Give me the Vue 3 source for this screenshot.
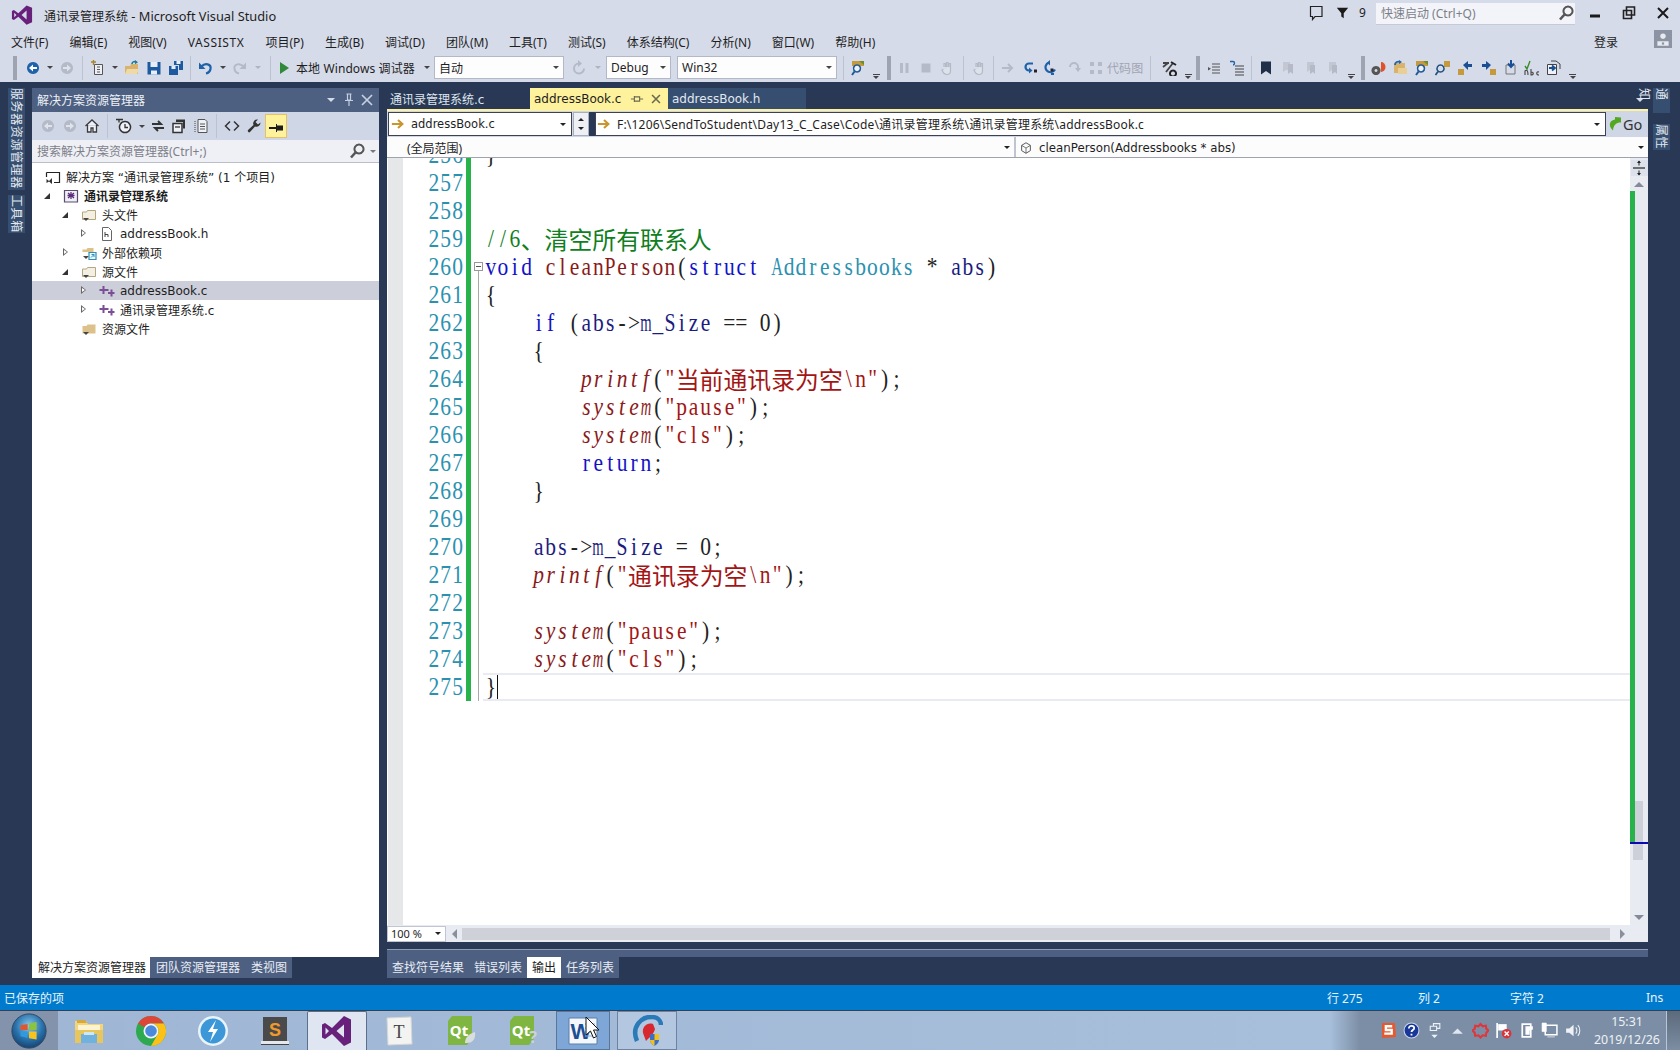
<script setup>
const G = '#b4bac8'
const BL = '#1e62aa'
const icons = {
  back: [['M8 2a6 6 0 1 0 .01 0Z', BL], ['M4 8l4-3.5V7h4v2H8v2.5z', '#fff']],
  fwdOff: [['M8 2a6 6 0 1 0 .01 0Z', G], ['M12 8L8 4.5V7H4v2h4v2.5z', '#dfe3ec']],
  backOff: [['M8 2a6 6 0 1 0 .01 0Z', G], ['M4 8l4-3.5V7h4v2H8v2.5z', '#dfe3ec']],
  newp: [['M4.5 4.5h8v10h-8z', '#eef0f6', '#555'], ['M7 7h3M7 9.5h3M7 12h3', 'none', '#555'], ['M1 2h5M3.5 0v5', 'none', '#a8842c', 1.4]],
  open: [['M1 6h5l1-2h7v10H1z', '#d9b36c'], ['M3 9h12l-2 5H1z', '#eed9a8'], ['M8 4c0-2 2-3 4-2', 'none', '#1e7a9a', 1.6], ['M11 0l3 2.2-3 2z', '#1e7a9a']],
  save: [['M1.5 2h13v12.5h-13z', '#1e5aa0'], ['M4.5 2h7v5h-7z', '#e8eef8'], ['M5 10.5h6v4H5z', '#e8eef8']],
  saveall: [['M1 6h9v9H1z', '#1e5aa0'], ['M3.5 6h4v3h-4z', '#e8eef8'], ['M6 1h9v9h-4V5H6z', '#1e5aa0'], ['M8.5 1h4v3h-4z', '#e8eef8']],
  undo: [['M4.5 6.5c3.5-4 10-2.5 9 2.5-.4 2.2-2.2 4-4.5 4.5', 'none', BL, 2.2], ['M2 2.5V9h6.5z', BL]],
  redoOff: [['M11.5 6.5c-3.5-4-10-2.5-9 2.5.4 2.2 2.2 4 4.5 4.5', 'none', G, 2], ['M14 2.5V9H7.5z', G]],
  play: [['M4 2l9 6-9 6z', '#2f8a3a']],
  restartOff: [['M8 3.5a5 5 0 1 0 5 5', 'none', G, 2], ['M7 0v7l4-3.5z', G]],
  pause: [['M4 3h3v10H4zM9.5 3h3v10h-3z', G]],
  stop: [['M3.5 3.5h9v9h-9z', G]],
  hand: [['M5 7V3.5h1.5V7M7.5 7V2.5H9V7M10 7V3.5h1.5V11c0 2-1.5 3.5-3.5 3.5S4 13 3 10l1.5-.5', '#dde1ea', G, 1.2]],
  arrowOff: [['M2 8h9M8 4l4 4-4 4', 'none', G, 2]],
  stepIn: [['M11 3.5H7a3.5 3.5 0 0 0 0 7h2', 'none', BL, 2.2], ['M7 7.5l3.5 3-3.5 3z', BL], ['M12 9.5h3v3h-3z', '#223']],
  stepOver: [['M5 2.5a5 5 0 1 0 6 7', 'none', BL, 2.2], ['M6 0L3 2.7l3 2.7z', BL], ['M6.5 8.5h3v3h-3z', '#223'], ['M7 13h3v2H7z', BL]],
  stepOutOff: [['M4 7a4 4 0 0 1 8 0v3', 'none', G, 2], ['M9 8l3 4 3-4z', G]],
  map: [['M2 2h4v4H2zM10 2h4v4h-4zM2 10h4v4H2zM10 10h4v4h-4z', G]],
  vaFix: [['M1 3h6M1 7l5-4M4 12l7-9', 'none', '#444', 1.8], ['M11 10.5a3 3 0 1 0 .01 0Z', 'none', '#222', 2], ['M9 2l5 3', 'none', '#222', 2]],
  indentL: [['M6 4h8M6 7h8M6 10h8M6 13h8', 'none', '#555', 1.2], ['M2 7l3 1.8L2 10.500z', '#555']],
  indentR: [['M6 6h9M6 9h9M6 12h9M6 15h9', 'none', '#444', 1.2], ['M1 1.500h3c2 0 2 3.500 0 3.500', 'none', '#1e62aa', 1.4]],
  bookmark: [['M3 1.500h10v13l-5-3.500-5 3.500z', '#1f2f48']],
  bmOff: [['M3 2h7v10l-3.500-2.500L3 12z', '#c2c7d2'], ['M8 4h5v10l-2.500-2-2.500 2z', G]],
  bmOff2: [['M5 2h7v10L8.500 9.500 5 12z', '#c2c7d2'], ['M8 5h5v9l-2-2-3 2z', G]],
  gear: [['M6 6a4.500 4.500 0 1 0 .01 0Z', '#555'], ['M6 9a1.500 1.500 0 1 0 .01 0Z', '#d9dbe0'], ['M11 2a4.500 5 0 0 1 0 10z', '#e2502a']],
  sync: [['M2 3h11v10H2z', '#d9b36c'], ['M6 8h9v6H6z', '#e9cf96'], ['M3 5c0-3 3-4 5-3', 'none', BL, 1.800], ['M7 0l3 2-3 2z', BL]],
  findRef: [['M2 1h12v5H2z', '#c49a3c'], ['M9 1l5 4V1z', '#6b8f2c'], ['M7 5a3.500 3.500 0 1 0 .01 0Z', '#eef2f8', '#1e5a9a', 1.600], ['M4.500 11.500L2 15', 'none', '#1e5a9a', 2]],
  findSym: [['M9 1h6v6H9z', '#c49a3c'], ['M5.500 5a3.500 3.500 0 1 0 .01 0Z', 'none', '#22527f', 1.500], ['M3 11.500L.5 15', 'none', '#22527f', 1.800]],
  goL: [['M1 9h6v6H1z', '#c49a3c'], ['M6 5l5-4v3h4v3h-4v3z', '#1a4f94']],
  goR: [['M9 9h6v6H9z', '#c49a3c'], ['M10 5L5 1v3H1v3h4v3z', '#1a4f94']],
  back2: [['M3 5h9v9H3z', 'none', '#777', 1], ['M8 0v6M5 3.500L8 7l3-3.500', 'none', '#1a4f94', 2]],
  spell: [['M1 6l2 3 3-8', 'none', '#3d8a2c', 1.400], ['M1 15V11c2-2 3 0 3 4M7 9v6c3 0 3-3 0-3M15 12c-3-1-3 3 0 3', 'none', '#444', 1.100]],
  refact: [['M1.500 4.500h9v10h-9z', '#eef1f7', '#444'], ['M5 1h5l4 3v5', 'none', '#444'], ['M3 8h5M6 5.500l3 2.500-3 2.500', 'none', '#1a4f94', 1.800]],
  home: [['M1.500 8L8 2l6.500 6M3.500 7v7h3.500v-4h2v4h3.500V7', '#eef1f7', '#3b3b3b', 1.300]],
  clock: [['M9 3.500a5.500 5.500 0 1 0 .01 0Z', '#eef1f7', '#333', 1.500], ['M9 6v3.500h3', 'none', '#333', 1.300], ['M0 1.500h7M3 1.500v3', 'none', '#333', 1.300]],
  refresh: [['M2 6h9l-3-3M14 10H5l3 3', 'none', '#333', 1.900]],
  collapse: [['M5 1.500h9v9h-2V4H5z', '#333'], ['M2 5.500h9v9H2z', '#eef1f7', '#333', 1.500], ['M4 9h5', 'none', '#333', 1.300]],
  files: [['M5 1.500h7l2 2v11H5z', '#eef1f7', '#555'], ['M7 6h5M7 8.500h5M7 11h5', 'none', '#555'], ['M2 3v11', 'none', '#777', 1.500, '1 1']],
  code: [['M6 3.500L1.500 8 6 12.500M10 3.500L14.500 8 10 12.500', 'none', '#333', 1.500]],
  wrench: [['M14.500 4.500a4 4 0 0 1-5.500 4L4 14c-1 1.200-3 -.5-2-2l5.500-5a4 4 0 0 1 4.500-5.500L9.500 4l2.500 2.500z', '#333']],
  pinOn: [['M1 9h7v2H1zM8 6h1v8H8zM9 7.500h6v5H9z', '#1d1d1d']],
  search: [['M10 1.500a4.500 4.500 0 1 0 .01 0Z', 'none', '#555', 2], ['M6.500 9.500L2 14.500', 'none', '#555', 2.600]],
  comment: [['M2.500 1.500h11.500v10H7l-2.500 3v-3h-2z', 'none', '#222', 1.200]],
  filter: [['M1 2h14L9.500 9v6L6.500 13V9z', '#1a1a1a']],
  restore: [['M5.500 2h8v8h-8zM2.500 5.500h8v8h-8z', '#d6dbe9', '#222', 1.600]],
  close: [['M3 3l10 10M13 3L3 13', 'none', '#1a1a1a', 2]],
  min: [['M3 9.500h10v3H3z', '#1a1a1a']],
  user: [['M0 0h16v16H0z', '#8c93a3'], ['M8 3a2.500 2.500 0 1 0 .01 0Z', '#e8eaf0'], ['M3 14V10h10v4z', '#e8eaf0'], ['M7 11h2v2H7z', '#8c93a3']],
  gold: [['M1 8h11M8 3.500L13 8l-5 4.500', 'none', '#c9952e', 2.400]],
  cube: [['M8 2l5 3v6l-5 3-5-3V5z', 'none', '#555', 1.100], ['M3 5l5 3 5-3M8 8v6', 'none', '#555', .9]],
  pinSm: [['M1 8h4M5 4.500v7M5 5.500h6v5H5zM11 8h4', 'none', '#6a6a52', 1.300]],
  xSm: [['M3.500 3.500l9 9M12.500 3.500l-9 9', 'none', '#6a6a52', 1.800]],
  pinW: [['M5.500 2h5M6.500 2v6h3V2M4 8.500h8M8 8.500V14', 'none', '#c6d0e0', 1.200]],
  xW: [['M3 3l10 10M13 3L3 13', 'none', '#c6d0e0', 1.700]],
  go: [['M14 1.500v5C9 6.500 6.500 9 6 14.500 2 11 1 5 8 3.500V1z', '#54a81f']],
  ddW: [['M4 6h8l-4 4z', '#d4dbe8']],
  sol: [['M1.500 3.500H14.500V13.500H9', 'none', '#222', 1.200], ['M1.500 3.500V8', 'none', '#222', 1.200], ['M1.500 10l2.500 2 3-3v6l-3-2.500L1.500 14z', '#333']],
  proj: [['M1.500 2.500h13v11.500h-13z', '#eef0f6', '#5c4a70', 1.200], ['M8 4v7M4.500 7.500h7M5 5l6 5M11 5l-6 5', 'none', '#5c2d7a', 1.300]],
  filt: [['M1.500 5h4l1-1.500h8v9h-13z', '#f3efe2', '#b5a77c'], ['M2 11l3 3 3-3z', '#444']],
  filtFull: [['M1.500 5h4l1-1.500h8v9h-13z', '#dcc28a'], ['M2 11l3 3 3-3z', '#444']],
  ext: [['M1.500 4.500h4l1-1.500h6v4h-11z', '#dcc28a'], ['M2 11l3 3 3-3z', '#444'], ['M8 7.500h7v7H8z', '#eef7fb', '#2f8fb8', 1.200], ['M10 12.500l3-3M10.500 9.500H13V12', 'none', '#2f8fb8']],
  hfile: [['M3.500 1.500h6l3 3v10h-9z', '#fff', '#666'], ['M6 6v5M6 8.500h3V11', 'none', '#444']],
  cfile: [['M.5 7h9M4.500 3v8M9 10h6.500M12.500 6.500v7', 'none', '#7a4f96', 2]]
}
const tb = [
  ['grip', 13, 5], ['sp', 0, 5], ['back', 0, 18], ['dd', 0, 16], ['fwdOff', 0, 18], ['sep', 0, 12],
  ['newp', 0, 20], ['dd', 0, 13], ['open', 0, 22], ['save', 0, 22], ['saveall', 0, 21], ['sep', 0, 8],
  ['undo', 0, 22], ['ddd', 0, 14], ['redoOff', 0, 20], ['ddg', 0, 16], ['sep', 0, 8], ['play', 0, 20]
]
const tb2 = [['restartOff', 29], ['ddg', 10], ['SP', 3]]
const tb3 = [
  ['sep', 12], ['findRef', 18], ['ovf', 18], ['grip', 8], ['pause', 22], ['stop', 21], ['hand', 22], ['sep', 10], ['hand', 22], ['sep', 7],
  ['arrowOff', 22], ['stepIn', 22], ['stepOver', 22], ['stepOutOff', 22], ['map', 21]
]
const tb4 = [
  ['sep', 15], ['vaFix', 24], ['ovf', 12], ['grip', 10], ['indentL', 24], ['indentR', 22], ['sep', 7], ['bookmark', 22], ['bmOff', 22], ['bmOff2', 22], ['bmOff2', 22],
  ['ovf', 16], ['grip', 8], ['gear', 22], ['sync', 21], ['findRef', 23], ['findSym', 20], ['goL', 24], ['goR', 23], ['back2', 21], ['spell', 22], ['refact', 21], ['ovf', 17]
]
const panelTools = [
  ['backOff', 22], ['fwdOff', 22], ['home', 22], ['sep', 9], ['clock', 24], ['dd', 12], ['refresh', 20], ['collapse', 22], ['files', 22], ['sep', 9], ['code', 22], ['wrench', 22], ['pinOn', 22]
]
const menus = ['文件(F)', '编辑(E)', '视图(V)', 'VASSISTX', '项目(P)', '生成(B)', '调试(D)', '团队(M)', '工具(T)', '测试(S)', '体系结构(C)', '分析(N)', '窗口(W)', '帮助(H)']
const tree = [
  { d: 0, ic: 'sol', t: '解决方案 “通讯录管理系统” (1 个项目)' },
  { d: 1, a: 'open', ic: 'proj', t: '通讯录管理系统', b: true },
  { d: 2, a: 'open', ic: 'filt', t: '头文件' },
  { d: 3, a: 'shut', ic: 'hfile', t: 'addressBook.h' },
  { d: 2, a: 'shut', ic: 'ext', t: '外部依赖项' },
  { d: 2, a: 'open', ic: 'filt', t: '源文件' },
  { d: 3, a: 'shut', ic: 'cfile', t: 'addressBook.c', sel: true },
  { d: 3, a: 'shut', ic: 'cfile', t: '通讯录管理系统.c' },
  { d: 2, ic: 'filtFull', t: '资源文件' }
]
const treePad = (r) => (r.d === 0 ? 13 : 8 + (r.d - 1) * 18) + 'px'
const c = 'c', k = 'k', v = 'v', f = 'f', s = 's', y = 'y', p = 'p', i = 'i'
const code = [
  [256, [['}', p]]],
  [257, []], [258, []],
  [259, [['//6、清空所有联系人', c]]],
  [260, [['void', k], [' ', p], ['cleanPerson', f], ['(', p], ['struct', k], [' ', p], ['Addressbooks', y], [' * ', p], ['abs', v], [')', p]]],
  [261, [['{', p]]],
  [262, [['    ', p], ['if', k], [' (', p], ['abs', v], ['->', p], ['m_Size', v], [' == 0)', p]]],
  [263, [['    {', p]]],
  [264, [['        ', p], ['printf', i], ['(', p], ['"当前通讯录为空\\n"', s], [');', p]]],
  [265, [['        ', p], ['system', i], ['(', p], ['"pause"', s], [');', p]]],
  [266, [['        ', p], ['system', i], ['(', p], ['"cls"', s], [');', p]]],
  [267, [['        ', p], ['return', k], [';', p]]],
  [268, [['    }', p]]],
  [269, []],
  [270, [['    ', p], ['abs', v], ['->', p], ['m_Size', v], [' = 0;', p]]],
  [271, [['    ', p], ['printf', i], ['(', p], ['"通讯录为空\\n"', s], [');', p]]],
  [272, []],
  [273, [['    ', p], ['system', i], ['(', p], ['"pause"', s], [');', p]]],
  [274, [['    ', p], ['system', i], ['(', p], ['"cls"', s], [');', p]]],
  [275, [['}', p]]]
]
const wide = { m: 'w-m', A: 'w-a', P: 'w-p', S: 'w-p' }
const split = (str) => str.split(/([\u3000-\u9fff]+)/).filter(Boolean).flatMap((t) =>
  /[\u3000-\u9fff]/.test(t) ? [{ t, cjk: true }] : [...t].map((ch) => ({ t: ch, w: wide[ch] || '' })))
const taskItems = ['folder', 'chrome', 'bolt', 'sublime', 'vs', 'note', 'qt', 'qt2', 'word', 'last']
const pathsOf = (n) => icons[n] || []
</script>

<template>
  <div class="app">
    <header class="top">
      <div class="title-row">
        <svg class="logo" viewBox="0 0 24 24"><path fill="#68217a" fill-rule="evenodd" d="M17 1.500L23 4.200V19.800L17 22.500 8 13.800 3.200 17.500 1 16.400V7.600L3.200 6.500 8 10.200ZM17 7.200 11.500 12 17 16.800ZM3.500 9.500V14.500L6 12Z" /></svg>
        <span class="app-title"><span class="t-cjk">通讯录管理系统</span> - Microsoft Visual Studio</span>
        <span class="fill"></span>
        <svg class="ic comment" viewBox="0 0 16 16"><path v-for="(q, n) in pathsOf('comment')" :key="n" :d="q[0]" :fill="q[1]" :stroke="q[2] || 'none'" :stroke-width="q[3] || 1" /></svg>
        <svg class="ic filter" viewBox="0 0 16 16"><path v-for="(q, n) in pathsOf('filter')" :key="n" :d="q[0]" :fill="q[1]" /></svg>
        <span class="fcount">9</span>
        <div class="quick">
          <span>快速启动 (Ctrl+Q)</span>
          <svg class="ic" viewBox="0 0 16 16"><path v-for="(q, n) in pathsOf('search')" :key="n" :d="q[0]" :fill="q[1]" :stroke="q[2] || 'none'" :stroke-width="q[3] || 1" /></svg>
        </div>
        <div class="win-btns">
          <svg v-for="w in ['min', 'restore', 'close']" :key="w" class="ic" viewBox="0 0 16 16"><path v-for="(q, n) in pathsOf(w)" :key="n" :d="q[0]" :fill="q[1]" :stroke="q[2] || 'none'" :stroke-width="q[3] || 1" /></svg>
        </div>
      </div>
      <div class="menu-row">
        <span v-for="m in menus" :key="m" class="menu-item" :class="{ va: m === 'VASSISTX' }">{{ m }}</span>
        <span class="fill"></span>
        <span class="login">登录</span>
        <svg class="avatar" viewBox="0 0 16 16"><path v-for="(q, n) in pathsOf('user')" :key="n" :d="q[0]" :fill="q[1]" /></svg>
      </div>
      <div class="tool-row">
        <template v-for="(it, idx) in tb" :key="'a' + idx">
          <span v-if="it[0] === 'grip'" class="grip" :style="{ marginLeft: it[1] + 'px' }"></span>
          <span v-else-if="it[0] === 'sp'" :style="{ width: it[2] + 'px' }"></span>
          <span v-else-if="it[0] === 'sep'" class="sep-slot" :style="{ width: it[2] + 'px' }"><i class="sep"></i></span>
          <span v-else-if="it[0] === 'dd' || it[0] === 'ddd' || it[0] === 'ddg'" class="slot" :style="{ width: it[2] + 'px' }"><i class="tri" :class="{ off: it[0] === 'ddg' }"></i></span>
          <span v-else class="slot" :style="{ width: it[2] + 'px' }"><svg class="ic" viewBox="0 0 16 16"><path v-for="(q, n) in pathsOf(it[0])" :key="n" :d="q[0]" :fill="q[1]" :stroke="q[2] || 'none'" :stroke-width="q[3] || 1" /></svg></span>
        </template>
        <span class="run-text">本地 Windows 调试器</span>
        <span class="slot w12"><i class="tri"></i></span>
        <div class="combo cb-auto"><span>自动</span><i class="tri"></i></div>
        <template v-for="(it, idx) in tb2" :key="'b' + idx">
          <span v-if="it[0] === 'SP'" :style="{ width: it[1] + 'px' }"></span>
          <span v-else-if="it[0] === 'ddg'" class="slot" :style="{ width: it[1] + 'px' }"><i class="tri off"></i></span>
          <span v-else class="slot" :style="{ width: it[1] + 'px' }"><svg class="ic" viewBox="0 0 16 16"><path v-for="(q, n) in pathsOf(it[0])" :key="n" :d="q[0]" :fill="q[1]" :stroke="q[2] || 'none'" :stroke-width="q[3] || 1" /></svg></span>
        </template>
        <div class="combo cb-debug"><span>Debug</span><i class="tri"></i></div>
        <div class="combo cb-win"><span>Win32</span><i class="tri"></i></div>
        <template v-for="(it, idx) in tb3" :key="'c' + idx">
          <span v-if="it[0] === 'grip'" class="grip"></span>
          <span v-else-if="it[0] === 'sep'" class="sep-slot" :style="{ width: it[1] + 'px' }"><i class="sep"></i></span>
          <span v-else-if="it[0] === 'ovf'" class="slot ovf" :style="{ width: it[1] + 'px' }"><b></b><i class="tri"></i></span>
          <span v-else class="slot" :style="{ width: it[1] + 'px' }"><svg class="ic" viewBox="0 0 16 16"><path v-for="(q, n) in pathsOf(it[0])" :key="n" :d="q[0]" :fill="q[1]" :stroke="q[2] || 'none'" :stroke-width="q[3] || 1" /></svg></span>
        </template>
        <span class="run-text off">代码图</span>
        <template v-for="(it, idx) in tb4" :key="'d' + idx">
          <span v-if="it[0] === 'grip'" class="grip"></span>
          <span v-else-if="it[0] === 'sep'" class="sep-slot" :style="{ width: it[1] + 'px' }"><i class="sep"></i></span>
          <span v-else-if="it[0] === 'ovf'" class="slot ovf" :style="{ width: it[1] + 'px' }"><b></b><i class="tri"></i></span>
          <span v-else class="slot" :style="{ width: it[1] + 'px' }"><svg class="ic" viewBox="0 0 16 16"><path v-for="(q, n) in pathsOf(it[0])" :key="n" :d="q[0]" :fill="q[1]" :stroke="q[2] || 'none'" :stroke-width="q[3] || 1" /></svg></span>
        </template>
      </div>
    </header>

    <main class="main">
      <aside class="rail left">
        <span class="rail-tab t1">服务器资源管理器</span>
        <span class="rail-tab t2">工具箱</span>
      </aside>

      <section class="panel">
        <div class="panel-box">
          <div class="panel-title">
            <span>解决方案资源管理器</span>
            <span class="fill"></span>
            <svg class="ic" viewBox="0 0 16 16"><path v-for="(q, n) in pathsOf('ddW')" :key="n" :d="q[0]" :fill="q[1]" /></svg>
            <svg class="ic" viewBox="0 0 16 16"><path v-for="(q, n) in pathsOf('pinW')" :key="n" :d="q[0]" :fill="q[1]" :stroke="q[2] || 'none'" :stroke-width="q[3] || 1" /></svg>
            <svg class="ic" viewBox="0 0 16 16"><path v-for="(q, n) in pathsOf('xW')" :key="n" :d="q[0]" :fill="q[1]" :stroke="q[2] || 'none'" :stroke-width="q[3] || 1" /></svg>
          </div>
          <div class="panel-tools">
            <template v-for="(it, idx) in panelTools" :key="idx">
              <span v-if="it[0] === 'sep'" class="sep-slot" :style="{ width: it[1] + 'px' }"><i class="sep"></i></span>
              <span v-else-if="it[0] === 'dd'" class="slot" :style="{ width: it[1] + 'px' }"><i class="tri"></i></span>
              <span v-else class="slot pt" :class="{ active: it[0] === 'pinOn' }" :style="{ width: it[1] + 'px' }"><svg class="ic" viewBox="0 0 16 16"><path v-for="(q, n) in pathsOf(it[0])" :key="n" :d="q[0]" :fill="q[1]" :stroke="q[2] || 'none'" :stroke-width="q[3] || 1" :stroke-dasharray="q[4]" /></svg></span>
            </template>
          </div>
          <div class="panel-search">
            <span>搜索解决方案资源管理器(Ctrl+;)</span>
            <span class="fill"></span>
            <svg class="ic" viewBox="0 0 16 16"><path v-for="(q, n) in pathsOf('search')" :key="n" :d="q[0]" :fill="q[1]" :stroke="q[2] || 'none'" :stroke-width="q[3] || 1" /></svg>
            <i class="tri off2"></i>
          </div>
          <div class="tree">
            <div v-for="(r, n) in tree" :key="n" class="tree-row" :class="{ sel: r.sel, bold: r.b, root: r.d === 0 }" :style="{ paddingLeft: treePad(r) }">
              <span class="arrow" :class="r.a"></span>
              <svg class="tree-ic" viewBox="0 0 16 16"><path v-for="(q, m) in pathsOf(r.ic)" :key="m" :d="q[0]" :fill="q[1]" :stroke="q[2] || 'none'" :stroke-width="q[3] || 1" /></svg>
              <span class="tree-t">{{ r.t }}</span>
            </div>
          </div>
        </div>
        <div class="dock-tabs left-dock">
          <span class="dock-tab on">解决方案资源管理器</span>
          <span class="dock-tab">团队资源管理器</span>
          <span class="dock-tab">类视图</span>
        </div>
      </section>

      <section class="work">
        <div class="tabs">
          <span class="doc-tab t-a">通讯录管理系统.c</span>
          <span class="doc-tab t-on">
            <span>addressBook.c</span>
            <svg class="ic s14" viewBox="0 0 16 16"><path v-for="(q, n) in pathsOf('pinSm')" :key="n" :d="q[0]" :fill="q[1]" :stroke="q[2]" :stroke-width="q[3]" /></svg>
            <svg class="ic s14" viewBox="0 0 16 16"><path v-for="(q, n) in pathsOf('xSm')" :key="n" :d="q[0]" :fill="q[1]" :stroke="q[2]" :stroke-width="q[3]" /></svg>
          </span>
          <span class="doc-tab t-c">addressBook.h</span>
          <span class="fill"></span>
          <svg class="ic tabs-dd" viewBox="0 0 16 16"><path v-for="(q, n) in pathsOf('ddW')" :key="n" :d="q[0]" :fill="q[1]" /></svg>
        </div>
        <div class="editor">
          <div class="nav1">
            <div class="nav-box file">
              <svg class="ic s14" viewBox="0 0 16 16"><path v-for="(q, n) in pathsOf('gold')" :key="n" :d="q[0]" :fill="q[1]" :stroke="q[2]" :stroke-width="q[3]" /></svg>
              <span>addressBook.c</span><span class="fill"></span><i class="tri dark"></i>
            </div>
            <div class="spin"><i class="tri up dark"></i><i class="tri dark"></i></div>
            <div class="nav-gap"></div>
            <div class="nav-box path">
              <svg class="ic s14" viewBox="0 0 16 16"><path v-for="(q, n) in pathsOf('gold')" :key="n" :d="q[0]" :fill="q[1]" :stroke="q[2]" :stroke-width="q[3]" /></svg>
              <span>F:\1206\SendToStudent\Day13_C_Case\Code\通讯录管理系统\通讯录管理系统\addressBook.c</span><span class="fill"></span><i class="tri dark"></i>
            </div>
            <div class="go">
              <svg class="go-ic" viewBox="0 0 16 16"><path v-for="(q, n) in pathsOf('go')" :key="n" :d="q[0]" :fill="q[1]" /></svg>
              <span>Go</span>
            </div>
          </div>
          <div class="nav2">
            <div class="scope left-scope"><span>(全局范围)</span><span class="fill"></span><i class="tri dark"></i></div>
            <div class="scope right-scope">
              <svg class="ic s14" viewBox="0 0 16 16"><path v-for="(q, n) in pathsOf('cube')" :key="n" :d="q[0]" :fill="q[1]" :stroke="q[2]" :stroke-width="q[3]" /></svg>
              <span>cleanPerson(Addressbooks * abs)</span><span class="fill"></span><i class="tri dark"></i>
            </div>
          </div>
          <div class="code-wrap">
            <div class="code">
              <div class="code-lines">
                <div v-for="l in code" :key="l[0]" class="row" :class="{ cur: l[0] === 275 }">
                  <span class="num"><span class="stretch">{{ l[0] }}</span></span>
                  <span class="green"></span>
                  <span class="fold" :class="{ line: l[0] >= 261, head: l[0] === 260, tail: l[0] === 256 }"><i v-if="l[0] === 260" class="foldbox"></i></span>
                  <span class="txt">
                    <span class="stretch">
                      <template v-for="(tk, ti) in l[1]" :key="ti">
                        <span :class="tk[1]"><template v-for="(pc, pi) in split(tk[0])" :key="pi"><span v-if="pc.cjk" class="cjk">{{ pc.t }}</span><span v-else class="ch" :class="pc.w">{{ pc.t }}</span></template></span>
                      </template>
                    </span>
                    <i v-if="l[0] === 275" class="caret"></i>
                  </span>
                </div>
              </div>
            </div>
            <div class="vscroll">
              <div class="splitter">
                <svg viewBox="0 0 16 16"><path d="M2 8h12" stroke="#222" stroke-width="1.200" /><path d="M8 1v4.500M8 10.500V15" stroke="#222" /><path d="M6 3l2-2.500L10 3zM6 13l2 2.500L10 13z" fill="#222" /></svg>
              </div>
              <i class="tri up scr-arrow"></i>
              <div class="track">
                <div class="thumb"></div>
                <div class="change"></div>
                <div class="caretmark"></div>
              </div>
              <i class="tri scr-arrow bottom"></i>
            </div>
          </div>
          <div class="hbar">
            <div class="zoom"><span>100 %</span><span class="fill"></span><i class="tri dark"></i></div>
            <i class="tri-l"></i>
            <div class="htrack"></div>
            <i class="tri-r"></i>
          </div>
        </div>
        <div class="output-strip"></div>
        <div class="dock-tabs out">
          <span class="dock-tab">查找符号结果</span>
          <span class="dock-tab">错误列表</span>
          <span class="dock-tab on">输出</span>
          <span class="dock-tab">任务列表</span>
        </div>
      </section>

      <aside class="rail right">
        <span class="rail-tab r1">通知</span>
        <span class="rail-tab r2">属性</span>
      </aside>
    </main>

    <footer class="status">
      <span>已保存的项</span>
      <span class="fill"></span>
      <span class="st st1">行 275</span>
      <span class="st st2">列 2</span>
      <span class="st st3">字符 2</span>
      <span class="st st4">Ins</span>
    </footer>

    <div class="taskbar">
      <div class="start">
        <svg viewBox="0 0 40 40" class="orb">
          <defs><radialGradient id="orbg" cx=".5" cy=".35" r=".7"><stop offset="0" stop-color="#8cc9ec" /><stop offset=".55" stop-color="#2a73ad" /><stop offset="1" stop-color="#123a66" /></radialGradient></defs>
          <circle cx="20" cy="20" r="18" fill="url(#orbg)" stroke="#33475f" />
          <path d="M11 14l7.500-1.500V19H11z" fill="#e2562d" /><path d="M20 12l8-1.500V19h-8z" fill="#8bc53f" />
          <path d="M11 20.500h7.500V27L11 25.500z" fill="#2f9ae0" /><path d="M20 20.500h8V29l-8-1.500z" fill="#f7c31c" />
        </svg>
      </div>
      <div v-for="t in taskItems" :key="t" class="task" :class="'t-' + t">
        <svg viewBox="0 0 32 32" class="task-ic">
          <template v-if="t === 'folder'">
            <path d="M2 6h11l2 3h15v19H2z" fill="#f2d479" /><path d="M4 5h8l2 3h-10z" fill="#d8a93a" /><path d="M5 10h22v8H5z" fill="#fbf4d2" /><path d="M2 15h28v13H2z" fill="#e8c65f" /><path d="M8 19h16v9H8z" fill="#6fb2dd" /><path d="M11 17h10v3H11z" fill="#cfe6f3" />
          </template>
          <template v-if="t === 'chrome'">
            <circle cx="16" cy="16" r="15" fill="#2da94f" /><path d="M16 1a15 15 0 0 1 13 7.500H16a7.500 7.500 0 0 0-6.500 3.700L3 8.500A15 15 0 0 1 16 1z" fill="#dc4537" /><path d="M29 8.500A15 15 0 0 1 16 31l6.500-11.200A7.500 7.500 0 0 0 16 8.500z" fill="#fbc116" /><circle cx="16" cy="16" r="7.500" fill="#eef3f8" /><circle cx="16" cy="16" r="5.800" fill="#4a89dc" />
          </template>
          <template v-if="t === 'bolt'">
            <circle cx="16" cy="16" r="15" fill="#e8f3fa" /><circle cx="16" cy="16" r="12.500" fill="#3c97d8" /><path d="M19 5l-8 12h5l-3 10 8-13h-5z" fill="#fff" />
          </template>
          <template v-if="t === 'sublime'">
            <path d="M4 2h24v24H4z" fill="#4a4a4a" /><path d="M2 26h28v3H2z" fill="#e5e7ea" /><path d="M2 29h28v1H2z" fill="#444" /><text x="16" y="21" text-anchor="middle" class="sub-t">S</text>
          </template>
          <template v-if="t === 'vs'">
            <path fill="#68217a" fill-rule="evenodd" d="M23 1L30 4.500V27.500L23 31 11 19 4 24 1 22.500V9.500L4 8 11 13ZM23 9.500L15.500 16 23 22.500ZM4.500 12.500V19.500L8 16Z" />
          </template>
          <template v-if="t === 'note'">
            <path d="M4 3l24-1 1 27-24 1z" fill="#f3f3f2" stroke="#d7d7d5" /><text x="16" y="23" text-anchor="middle" class="note-t">T</text>
          </template>
          <template v-if="t === 'qt' || t === 'qt2'">
            <path d="M7 1h20v23l-5 6H3V6z" fill="#7fb641" /><text x="14" y="21" text-anchor="middle" class="qt-t">Qt</text>
            <path v-if="t === 'qt'" d="M20 28c0-6 4-9 10-11 1 6-2 12-10 11z" fill="#d9dde0" />
            <text v-else x="26" y="28" text-anchor="middle" class="qtq">?</text>
          </template>
          <template v-if="t === 'word'">
            <path d="M2 3h28v26H2z" fill="#f4f7fb" stroke="#5b7fa8" /><text x="14" y="24" text-anchor="middle" class="w-t">W</text><path d="M18 9h10M18 13h10M18 17h10M18 21h10" stroke="#8fb1d6" />
          </template>
          <template v-if="t === 'last'">
            <path d="M6 26C0 12 10 1 22 2c5 .5 8 4 8 8" fill="none" stroke="#2a7ab8" stroke-width="4.500" /><path d="M22 9c-6-2-11 3-10 9l3 8c3-3 8-7 9-12z" fill="#d8282f" /><path d="M19 19h9v6c0 3-3 5-4.500 6-1.500-1-4.500-3-4.500-6z" fill="#3b6fc4" /><path d="M23.500 19h4.500v6h-4.500zM19 25h4.500v6c-1.500-1-4.500-3-4.500-6z" fill="#f2c21a" />
          </template>
        </svg>
      </div>
      <svg class="pointer" viewBox="0 0 16 24"><path d="M1 1v18l4.500-4 3 7 3-1.500-3-6.500H14z" fill="#fff" stroke="#111" /></svg>
      <div class="tray">
        <svg class="tr" viewBox="0 0 16 16"><path d="M2 1h12l1 13-13 1z" fill="#e9572a" /><path d="M11.500 4H5.500v3.500h5.500V11H4" fill="none" stroke="#fff" stroke-width="2.200" /></svg>
        <svg class="tr" viewBox="0 0 16 16"><circle cx="8" cy="8" r="7" fill="#19379a" stroke="#c8d4e8" /><path d="M5.500 6c0-3.500 5.500-3 5 0-.3 1.600-2.500 1.700-2.500 3.500M8 11v1.800" fill="none" stroke="#fff" stroke-width="1.700" /></svg>
        <svg class="tr" viewBox="0 0 16 16"><path d="M4 4h6v4H4zM7 4V1.500h6V6h-3" fill="none" stroke="#eef2f7" /><path d="M5 12h6l-3 3z" fill="#eef2f7" /></svg>
        <svg class="tr" viewBox="0 0 16 16"><path d="M3 11l5-5 5 5z" fill="#dfe6ef" /></svg>
        <svg class="tr" viewBox="0 0 16 16"><path d="M8 2l2 2 3-.5.5 3 2 1.500-2 2-.5 3-3-.5-2 2-2-2-3 .5-.5-3-2-2 2-1.500.5-3 3 .5z" fill="none" stroke="#e0363a" stroke-width="2" /></svg>
        <svg class="tr" viewBox="0 0 16 16"><path d="M2 1v14" stroke="#fff" stroke-width="1.600" /><path d="M3 2h8v6H3z" fill="#fff" /><circle cx="11" cy="11" r="4.500" fill="#d9343a" /><path d="M9 9l4 4M13 9l-4 4" stroke="#fff" stroke-width="1.300" /></svg>
        <svg class="tr" viewBox="0 0 16 16"><path d="M4 2h8v12H4z" fill="none" stroke="#fff" stroke-width="1.600" /><path d="M7 4v8h4V8l3-1V4H11z" fill="#fff" /></svg>
        <svg class="tr" viewBox="0 0 16 16"><path d="M4 3h11v9H4z" fill="none" stroke="#fff" stroke-width="1.400" /><path d="M1 1h4v8H1zM6 14h7" fill="#fff" stroke="#fff" stroke-width=".6" /></svg>
        <svg class="tr" viewBox="0 0 16 16"><path d="M2 6h3l4-3.500v11L5 10H2z" fill="#eef2f7" /><path d="M11 5c1.500 1.500 1.500 4.500 0 6M13 3c2.500 2.500 2.500 7.500 0 10" fill="none" stroke="#eef2f7" /></svg>
        <div class="clock"><span>15:31</span><span>2019/12/26</span></div>
        <div class="show-desk"></div>
      </div>
    </div>
  </div>
</template>

<style scoped>
.app { width: 1680px; height: 1050px; display: flex; flex-direction: column; overflow: hidden; font-family: "Noto Sans", "Noto Sans CJK SC", sans-serif; font-size: 12px; color: #1e1e1e; }
.fill { flex: 1; }
.ic { width: 16px; height: 16px; flex: none; display: block; }
.s14 { width: 14px; height: 14px; }
.tri { display: block; width: 0; height: 0; border-left: 3.500px solid transparent; border-right: 3.500px solid transparent; border-top: 3.500px solid #444; flex: none; }
.tri.off { border-top-color: #aeb4c2; }
.tri.up { border-top: 0; border-bottom: 3.500px solid #444; }
.tri.dark { border-top-color: #222; }
.tri.up.dark { border-bottom-color: #222; }
.tri.off2 { border-top-color: #777; margin-left: 5px; margin-right: 2px; }

.top { height: 82px; flex: none; background: #d6dbe9; }
.title-row { height: 27px; display: flex; align-items: center; padding-left: 11px; }
.logo { width: 22px; height: 22px; margin-top: 2px; }
.app-title { margin-left: 11px; font-size: 12.800px; margin-top: 5px; }
.t-cjk { font-size: 12px; }
.comment { margin-right: 11.500px; margin-top: -1px; }
.filter { margin-right: 10.500px; width: 13px; height: 13px; margin-top: -2px; }
.fcount { width: 17px; margin-top: -3px; }
.quick { width: 199px; height: 22px; background: #f3f4f9; border-bottom: 1px solid #c5cad6; display: flex; align-items: center; justify-content: space-between; padding: 0 1px 0 5px; box-sizing: border-box; color: #7c7f88; }
.win-btns { display: flex; width: 105px; justify-content: space-between; padding: 0 9px 0 12px; box-sizing: border-box; margin-top: -2px; }

.menu-row { height: 26px; display: flex; align-items: center; padding: 4px 8px 0 11px; box-sizing: border-box; }
.menu-item { margin-right: 21px; white-space: nowrap; font-size: 12px; }
.menu-item.va { letter-spacing: .6px; }
.login { margin-right: 36px; }
.avatar { width: 18px; height: 18px; margin-top: -6px; }

.tool-row { height: 29px; display: flex; align-items: center; }
.slot { height: 24px; display: flex; align-items: center; justify-content: center; flex: none; }
.w12 { width: 14px; }
.sep-slot { height: 24px; display: flex; justify-content: center; flex: none; }
.sep { width: 1px; height: 24px; background: #bcc2d0; display: block; }
.grip { width: 4px; height: 24px; flex: none; background-image: radial-gradient(#9aa0ae 0.7px, transparent 0.8px); background-size: 2px 2px; margin: 0 2px; }
.ovf { flex-direction: column; justify-content: flex-end; gap: 1px; padding-bottom: 1px; box-sizing: border-box; }
.ovf b { display: block; width: 7px; height: 1px; background: #444; }
.run-text { white-space: nowrap; font-size: 12px; margin-left: 2px; width: 124px; flex: none; letter-spacing: .1px; }
.run-text.off { color: #9fa5b3; width: 36px; margin-left: 1px; }
.combo { height: 23px; background: #fdfdfe; border: 1px solid #b3b8c6; box-sizing: border-box; display: flex; align-items: center; justify-content: space-between; padding: 0 4px; flex: none; }
.cb-auto { width: 130px; }
.cb-debug { width: 65px; margin-right: 6px; }
.cb-win { width: 160px; }

.main { height: 903px; flex: none; background: #293955; display: flex; padding: 6px 0 7px; box-sizing: border-box; }
.rail { width: 32px; flex: none; position: relative; }
.rail-tab { display: block; writing-mode: vertical-rl; text-orientation: sideways; font-size: 12px; color: #e3e8f0; background: #364e6f; width: 17px; line-height: 17px; text-align: start; box-sizing: border-box; letter-spacing: .6px; }
.rail.left { padding-left: 8px; box-sizing: border-box; }
.t1 { height: 102px; margin-bottom: 5px; }
.t2 { height: 38px; }
.rail.right { padding-left: 5px; box-sizing: border-box; }
.r1 { height: 25px; margin-bottom: 11px; }
.r2 { height: 26px; }

.panel { width: 347px; flex: none; margin-right: 8px; display: flex; flex-direction: column; }
.panel-box { flex: 1; background: #fff; display: flex; flex-direction: column; }
.panel-title { height: 24px; background: #4d6082; color: #eef1f6; display: flex; align-items: center; padding: 0 4px 0 5px; gap: 2px; flex: none; }
.panel-title span:first-child { font-size: 12px; }
.panel-tools { height: 28px; background: #cfd6e5; display: flex; align-items: center; padding-left: 5px; flex: none; }
.pt.active { background: #fff29d; box-shadow: inset 0 0 0 1px #e5c365; }
.panel-search { height: 23px; background: #eff0f5; border-bottom: 1px solid #b9bec9; box-sizing: border-box; display: flex; align-items: center; padding: 0 1px 0 5px; color: #7d8089; flex: none; }
.tree { padding-top: 4px; }
.tree-row { height: 19px; display: flex; align-items: center; white-space: nowrap; font-size: 12px; box-sizing: border-box; }
.tree-row.sel { background: #ccced9; }
.tree-row.bold { font-weight: 700; }
.arrow { width: 23px; height: 19px; flex: none; position: relative; display: block; }
.root .arrow { width: 0; }
.tree-t { margin-left: 5px; }
.root .tree-t { margin-left: 5px; }
.arrow.open::after { content: ""; position: absolute; left: 4px; top: 7px; border-style: solid; border-width: 0 0 6px 6px; border-color: transparent transparent #333 transparent; }
.arrow.shut::after { content: ""; position: absolute; left: 5px; top: 5px; border-style: solid; border-width: 4.500px 0 4.500px 5px; border-color: transparent transparent transparent #666; }
.arrow.shut::before { content: ""; position: absolute; left: 6px; top: 7px; border-style: solid; border-width: 2.500px 0 2.500px 3px; border-color: transparent transparent transparent #fff; z-index: 1; }
.tree-ic { width: 16px; height: 16px; flex: none; }
.tree-row:not(.bold) .tree-t { font-family: "DejaVu Sans", "Noto Sans CJK SC", sans-serif; font-size: 12px; }

.dock-tabs { height: 21px; display: flex; flex: none; }
.dock-tab { background: #4d6082; color: #e8ecf3; padding: 0 5px; line-height: 21px; white-space: nowrap; font-size: 12px; }
.dock-tab.on { background: #fff; color: #1e1e1e; }
.left-dock .dock-tab { padding: 0 5px 0 6px; }
.left-dock .dock-tab.on { padding: 0 4px 0 6px; }

.work { width: 1261px; flex: none; display: flex; flex-direction: column; }
.tabs { height: 21px; display: flex; align-items: stretch; flex: none; }
.doc-tab { display: flex; align-items: center; white-space: nowrap; font-family: "DejaVu Sans", "Noto Sans CJK SC", sans-serif; font-size: 12px; }
.t-a { width: 143px; padding-left: 3px; box-sizing: border-box; color: #dfe5ee; }
.t-on { width: 138px; padding-left: 4px; box-sizing: border-box; background: #fff29d; color: #1e1e1e; }
.t-on svg:first-of-type { margin-left: 9px; }
.t-on svg:last-of-type { margin-left: 5px; }
.t-c { width: 138px; padding-left: 4px; box-sizing: border-box; background: #364e6f; color: #e3e8f0; }
.tabs-dd { align-self: center; margin-top: 3px; }
.editor { flex: none; background: #fff; display: flex; flex-direction: column; border-top: 2px solid #fff29d; margin-bottom: 7px; height: 831px; }
.nav1 { height: 26px; background: #cfd6e5; display: flex; flex: none; align-items: center; }
.nav-box { height: 24px; border: 1px solid #3d4150; background: #fff; box-sizing: border-box; display: flex; align-items: center; padding-right: 5px; font-family: "DejaVu Sans", "Noto Sans CJK SC", sans-serif; font-size: 11.500px; flex: none; }
.file { width: 184px; padding-left: 2px; margin-left: 1px; }
.file span:first-of-type { margin-left: 6px; }
.path { width: 1011px; padding-left: 1px; }
.path span:first-of-type { margin-left: 6px; font-size: 12px; letter-spacing: .2px; font-family: "Noto Sans", "Noto Sans CJK SC", sans-serif; }
.spin { width: 16px; height: 24px; background: #eef0f6; border: 1px solid #a8aebc; box-sizing: border-box; margin-left: 1px; display: flex; flex-direction: column; align-items: center; justify-content: space-around; padding: 2px 0; flex: none; }
.nav-gap { width: 6px; height: 24px; background: #293955; flex: none; }
.go { flex: 1; min-width: 0; display: flex; align-items: center; padding-left: 1px; font-family: "Noto Sans", sans-serif; font-size: 14.500px; color: #333; }
.go-ic { width: 16px; height: 22px; flex: none; }
.nav2 { height: 21px; display: flex; flex: none; border-bottom: 1px solid #9ea3af; box-sizing: border-box; background: #fcfcfd; }
.scope { display: flex; align-items: center; height: 20px; box-sizing: border-box; padding: 1px 4px 0 0; font-size: 12px; }
.left-scope { width: 629px; padding-left: 20px; border-right: 2px solid #bfc4d0; }
.right-scope { flex: 1; padding-left: 3px; font-family: "DejaVu Sans", sans-serif; font-size: 11.800px; }
.right-scope span:first-of-type { margin-left: 6px; }
.code-wrap { flex: 1; min-height: 0; display: flex; }
.code { flex: 1; min-width: 0; overflow: hidden; background: linear-gradient(90deg, #fff 1px, #e6e7e8 1px, #e6e7e8 16px, #fff 16px); }
.code-lines { margin-top: -17px; }
.row { height: 28px; display: flex; }
.num { width: 77px; flex: none; text-align: right; color: #2b91af; box-sizing: border-box; }
.stretch { display: block; transform: scaleY(1.15); transform-origin: center; white-space: pre; font-family: "Liberation Serif", serif; font-size: 21.500px; line-height: 28px; height: 28px; }
.num .stretch { letter-spacing: 1.100px; }
.green { width: 5px; margin-left: 2px; background: #27b24b; flex: none; }
.fold { width: 12px; flex: none; position: relative; }
.fold.line::before { content: ""; position: absolute; left: 7px; top: 0; bottom: 0; width: 1px; background: #a9a9a9; }
.fold.head::before { content: ""; position: absolute; left: 7px; top: 18px; bottom: 0; width: 1px; background: #a9a9a9; }
.fold.tail::before { content: ""; position: absolute; left: 7px; top: 0; height: 17px; width: 6px; border-left: 1px solid #a9a9a9; border-bottom: 1px solid #a9a9a9; box-sizing: border-box; }
.foldbox { position: absolute; left: 3px; top: 9px; width: 9px; height: 9px; border: 1px solid #999; box-sizing: border-box; background: linear-gradient(#555, #555) center / 5px 1px no-repeat #fff; }
.txt { flex: 1; padding-left: 2px; box-sizing: border-box; position: relative; color: #222; }
.row.cur .txt { border-top: 2px solid #eaeaf2; border-bottom: 2px solid #eaeaf2; }
.row.cur .txt .stretch { margin-top: -2px; }
.caret { position: absolute; left: 14px; top: 0; bottom: 0; width: 1px; background: #111; }
.ch { display: inline-flex; justify-content: center; width: 11.930px; height: 28px; vertical-align: top; white-space: pre; }
.w-m { transform: scaleX(.68); }
.w-a { transform: scaleX(.75); }
.w-p { transform: scaleX(.92); }
.c { color: #0f7f22; }
.k { color: #1212c8; }
.v { color: #1c1c80; }
.f { color: #8a1a1a; }
.s { color: #a31515; }
.y { color: #2b91af; }
.p { color: #222; }
.i { color: #8a1a1a; font-style: italic; }
.cjk { display: inline-block; font-family: "Noto Sans CJK SC", sans-serif; font-size: 23.860px; line-height: 28px; height: 28px; vertical-align: top; transform: scaleY(.87); font-weight: 400; }
.vscroll { width: 18px; flex: none; background: #e9ebf3; display: flex; flex-direction: column; align-items: center; }
.splitter { width: 17px; height: 16px; margin-top: 2px; flex: none; background: #dde1ec; }
.splitter svg { width: 16px; height: 16px; display: block; }
.scr-arrow { border-left-width: 5px; border-right-width: 5px; margin-top: 6px; }
.tri.up.scr-arrow { border-bottom: 5px solid #858a99; }
.tri.scr-arrow { border-top-color: #858a99; }
.tri.scr-arrow.bottom { border-top-width: 5px; margin: 0 0 5px; }
.track { flex: 1; width: 100%; position: relative; margin: 4px 0 8px; }
.thumb { position: absolute; left: 3px; width: 10px; top: 610px; bottom: 47px; background: #cdd0d8; }
.change { position: absolute; left: 0; top: 0; width: 5px; height: 653px; background: #27b24b; }
.caretmark { position: absolute; left: 0; right: 0; top: 651px; height: 2px; background: #0a0ab0; }
.hbar { height: 17px; display: flex; align-items: center; background: #e9ebf3; flex: none; }
.zoom { width: 59px; height: 16px; background: #fff; display: flex; align-items: center; padding: 0 4px 0 3px; box-sizing: border-box; border: 1px solid #c0c5d0; font-size: 11px; flex: none; }
.tri-l { width: 0; height: 0; border-style: solid; border-width: 5px 5px 5px 0; border-color: transparent #8a8f9c transparent transparent; margin: 0 5px 0 6px; }
.htrack { width: 1148px; height: 12px; background: #ced1d8; }
.tri-r { width: 0; height: 0; border-style: solid; border-width: 5px 0 5px 5px; border-color: transparent transparent transparent #8a8f9c; margin-left: 10px; }
.output-strip { height: 8px; flex: none; background: #4d6082; border-top: 1px solid #8e9cb4; box-sizing: border-box; }

.status { height: 25px; flex: none; background: #007acc; color: #eaf5fc; display: flex; align-items: center; padding-left: 4px; font-size: 12px; }
.st { white-space: nowrap; }
.st1 { width: 91px; }
.st2 { width: 92px; }
.st3 { width: 136px; }
.st4 { width: 34px; }

.taskbar { height: 40px; flex: none; display: flex; position: relative; background: linear-gradient(90deg, #8ea4c0 0, #9fb7d4 60px, #a7bfdb 1330px, #7c8ea5 1360px); border-top: 1px solid #2e4258; box-sizing: border-box; }
.start { width: 58px; flex: none; background: #8293ab; display: flex; align-items: center; justify-content: center; }
.orb { width: 38px; height: 38px; }
.task { width: 62px; height: 100%; flex: none; display: flex; align-items: center; justify-content: center; box-sizing: border-box; }
.task-ic { width: 32px; height: 32px; }
.t-vs { background: #dfe6f1; border: 1px solid #5a6f8c; border-bottom: 0; width: 60px; margin: 0 1px; border-radius: 2px 2px 0 0; }
.t-word { background: #7ea6d6; border: 1px solid #5a769c; width: 54px; margin: 0 6px 0 2px; }
.t-last { background: #b3c7e0; border: 1px solid #6d83a1; width: 60px; margin: 0 1px; }
.note-t { font-family: "Liberation Serif", serif; font-size: 18px; fill: #444; }
.sub-t { font-family: "Liberation Sans", sans-serif; font-weight: 700; font-size: 18px; fill: #f09a2c; }
.qt-t { font-family: "Noto Sans", sans-serif; font-weight: 700; font-size: 15px; fill: #fff; }
.qtq { font-family: "Noto Sans", sans-serif; font-weight: 700; font-size: 16px; fill: #ccd2d8; }
.w-t { font-family: "Liberation Sans", sans-serif; font-weight: 700; font-size: 22px; fill: #1d4f95; }
.pointer { position: absolute; left: 585px; top: 5px; width: 16px; height: 24px; }
.tray { position: absolute; right: 0; top: 0; bottom: 0; width: 305px; display: flex; align-items: center; color: #eef2f7; }
.tr { width: 17px; height: 17px; flex: none; margin-right: 6px; }
.tr:nth-child(1) { margin-left: 5px; }
.clock { display: flex; flex-direction: column; align-items: center; width: 80px; line-height: 18px; font-size: 12.400px; flex: none; }
.show-desk { width: 14px; height: 100%; background: linear-gradient(#5b6a7c, #7d8da2); border-left: 1px solid #b9c6d6; box-sizing: border-box; position: absolute; right: 0; }
</style>

<style>
html, body { margin: 0; background: #293955; }
</style>
